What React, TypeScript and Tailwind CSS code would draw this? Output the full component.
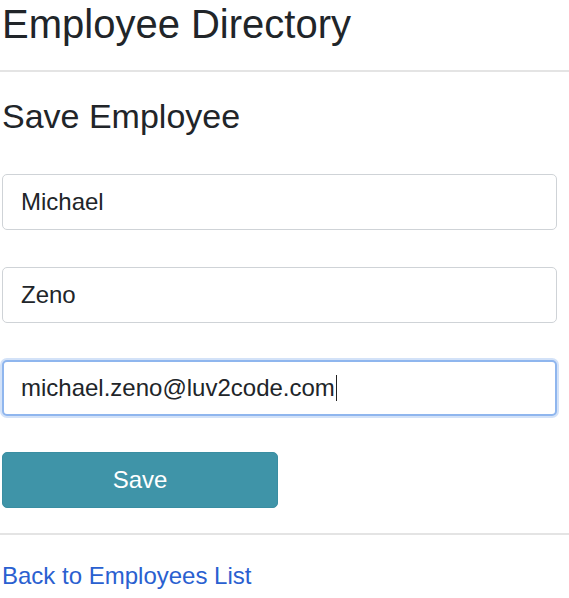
import React from "react";

const fields = [
	{ id: "firstName", value: "Michael" },
	{ id: "lastName", value: "Zeno" },
];

export default function App() {
	return (
		<div
			className="min-h-[598px] bg-white pl-[2px] text-[#212529]"
			style={{ fontFamily: '"Liberation Sans", Arial, sans-serif' }}
		>
			<h1 className="text-[40px] leading-[48px] font-normal">Employee Directory</h1>
			<hr className="mt-[22px] -ml-[2px] h-[2px] border-0 bg-[#e4e4e4]" />

			<h2 className="mt-[24px] text-[34px] leading-[41px] font-normal">Save Employee</h2>

			<form className="mt-[37px] flex w-[555px] flex-col gap-[37px]">
				{fields.map((f) => (
					<div
						key={f.id}
						className="flex h-[56px] items-center rounded-[5px] border border-[#cfd3d7] bg-white pl-[18px] text-[24px]"
					>
						{f.value}
					</div>
				))}
				<div className="flex h-[56px] items-center rounded-[5px] border-2 border-[#8fb6ee] bg-white pl-[17px] text-[24px] shadow-[0_0_0_2px_#d3e2f8]">
					michael.zeno@luv2code.com
					<span className="ml-[1px] inline-block h-[26px] w-[1.5px] bg-[#222]" />
				</div>
			</form>

			<button
				type="button"
				className="mt-[36px] h-[56px] w-[276px] rounded-[5px] border border-[#3a8ea2] bg-[#3f94a8] text-[24px] text-white"
			>
				Save
			</button>

			<hr className="mt-[25px] -ml-[2px] h-[2px] border-0 bg-[#e4e4e4]" />

			<a href="#" className="mt-[27px] block text-[24px] leading-[28px] text-[#2a60d0]">
				Back to Employees List
			</a>
		</div>
	);
}
